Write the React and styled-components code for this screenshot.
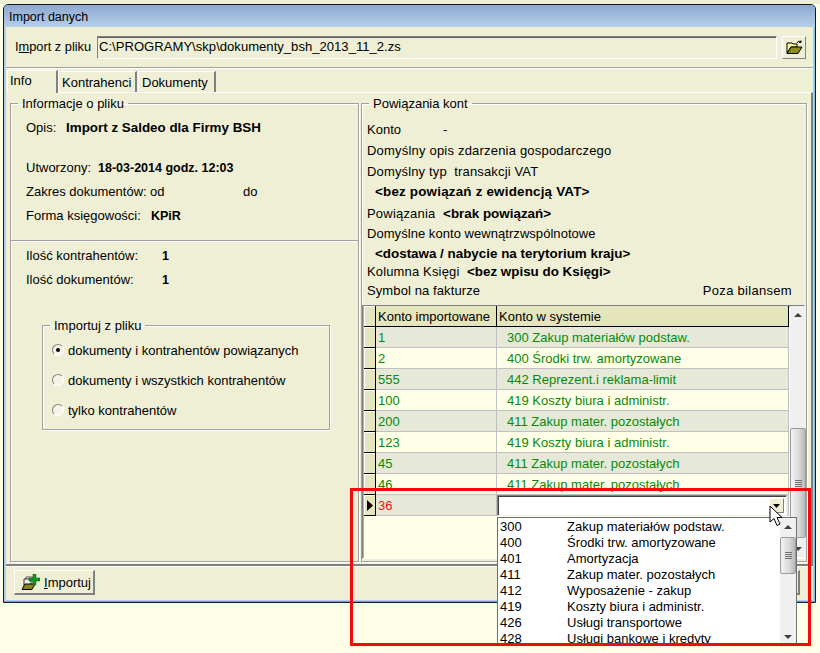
import React from 'react';
import styled, { createGlobalStyle } from 'styled-components';

const Global = createGlobalStyle`
  html, body { margin: 0; padding: 0; background: #FFFFE8; overflow: hidden; }
  body { font-family: "Liberation Sans", Arial, sans-serif; font-size: 13px; color: #000; }
  * { box-sizing: border-box; }
`;

const Page = styled.div`
  position: relative; width: 820px; height: 653px; overflow: hidden; padding: 4px 0 0 3px;
  background: linear-gradient(#EFEFD6, #EFEFD6) 0 0 / 100% 4px no-repeat, #FFFFE8;
`;
const Win = styled.div`
  width: 813px; height: 599px; display: flex; flex-direction: column;
  border: 1px solid #1a1a1a; border-radius: 5px 5px 0 0;
  background: #B4CDE8; padding: 0 2px 2px 2px; box-shadow: inset 0 -1px 0 #3FB6D8, inset -1px 0 0 #7FC4E4;
`;
const TitleBar = styled.div`
  height: 22px; flex: none; margin: 0 -2px; padding: 2px 0 0 5px; display: flex; align-items: center;
  background: linear-gradient(#8EA9CF, #B5CEE9); font-size: 12.5px; border-radius: 4px 4px 0 0;
`;
const Client = styled.div`
  flex: 1; display: flex; flex-direction: column; background: #EFEFD5; min-height: 0;
`;
const ImportBar = styled.div`
  height: 41px; flex: none; padding: 9px 9px 0 9px; display: flex; align-items: flex-start;
  border-bottom: 1px solid #A0A0A0;
`;
const FileLabel = styled.label`
  width: 82px; height: 22px; line-height: 22px; flex: none; font-size: 12.8px;
  u { text-decoration: underline; }
`;
const PathField = styled.div`
  flex: none; width: 680px; height: 23px; line-height: 20px; padding-left: 1px; background: #EFEFD5;
  border: 1px solid #fff; border-top: 1px solid #808080; border-left: 1px solid #808080;
  box-shadow: inset 0 1px 0 #606060; font-size: 13.1px; overflow: hidden; white-space: nowrap;
`;
const IconBtn = styled.button`
  width: 24px; height: 23px; margin-left: 5px; padding: 0; flex: none; background: #EFEFD5; display: flex;
  align-items: center; justify-content: center;
  border: 1px solid #808080; border-top-color: #fff; border-left-color: #fff;
`;
const TabStrip = styled.div`
  height: 24px; flex: none; display: flex; align-items: flex-end; padding-left: 1px; border-top: 1px solid #fff;
  position: relative; z-index: 1;
`;
const Tab = styled.div`
  height: ${p => (p.$active ? 23 : 21)}px; width: ${p => p.$w}px; padding: ${p => (p.$active ? '0 0 3px 2px' : '0 0 0 3px')};
  line-height: ${p => (p.$active ? 20 : 22)}px; margin-right: ${p => (p.$active ? 0 : 1)}px; border-top: 1px solid #fff; border-left: 1px solid #fff;
  border-right: 2px solid #808080; font-size: 13px; margin-bottom: ${p => (p.$active ? -1 : 0)}px;
  background: #EFEFD5; white-space: nowrap;
`;
const TabPanel = styled.div`
  flex: 1; min-height: 0; display: flex; margin-left: 1px; padding: 3px 4px 3px 3px; gap: 2px;
  border-top: 1px solid #fff; border-right: 2px solid #808080;
`;
const Group = styled.fieldset`
  margin: 0; padding: 0; min-width: 0; height: ${p => p.$h || 'auto'}; flex: ${p => p.$flex || 'none'};
  width: ${p => p.$w || 'auto'}; margin-left: ${p => p.$ml || 0}px; margin-top: ${p => p.$mt || 0}px;
  border: 1px solid #A0A0A0; box-shadow: 1px 1px 0 #fff, inset 1px 1px 0 #fff;
`;
const Legend = styled.legend`
  margin-left: 7px; padding: 0 4px; height: 14px; line-height: 16px; white-space: nowrap;
`;
const LeftBody = styled.div` padding-top: 8px; `;
const Row = styled.div`
  height: 20px; line-height: 20px; display: flex; white-space: nowrap; letter-spacing: ${p => p.$ls ?? 0}px;
  padding-left: ${p => p.$pl ?? 15}px; margin-top: ${p => p.$mt || 0}px;
`;
const Lab = styled.span` width: ${p => p.$w}px; flex: none; `;
const Bold = styled.b`
  font-weight: 700; font-size: ${p => (p.$small ? 12.5 : 13.4)}px; letter-spacing: ${p => p.$ls ?? 0}px;
`;
const Divider = styled.div`
  height: 2px; margin-top: 14px; border-top: 1px solid #A0A0A0; border-bottom: 1px solid #fff;
`;
const OptRow = styled.div`
  height: 20px; display: flex; align-items: center; gap: 4px; padding-left: 9px; margin-bottom: 10px; white-space: nowrap;
`;
const OptBody = styled.div` padding-top: 8px; `;
const Radio = styled.span`
  width: 12px; height: 12px; border-radius: 50%; flex: none; background: #F4F4EA; display: flex; align-items: center; justify-content: center;
  border: 1px solid #808080; border-right-color: #fff; border-bottom-color: #fff;
  &::after { content: ''; width: 4px; height: 4px; border-radius: 50%; background: ${p => (p.$on ? '#000' : 'transparent')}; }
`;
const RightBody = styled.div` padding-top: 10px; `;
const RightRow = styled(Row)` padding-left: 5px; justify-content: ${p => p.$between ? 'space-between' : 'flex-start'}; padding-right: 14px; `;
const Grid = styled.div`
  position: relative; margin: 4px 1px 0 0; height: 254px; display: flex; background: #FFFFE8;
  border: 1px solid #808080; border-right-color: #fff; border-bottom-color: #fff;
  box-shadow: inset 1px 1px 0 #B0B0B0; padding: 0 1px 1px 1px;
`;
const Table = styled.div`
  width: 425px; flex: none; margin-right: 1px;
`;
const TRow = styled.div`
  display: grid; grid-template-columns: 12px 121px 292px; height: 21px; line-height: 21px;
  background: ${p => (p.$head ? '#E5E5BD' : p.$odd ? '#E6E9D8' : '#FFFFE8')};
  border-bottom: 1px solid ${p => (p.$head ? '#000' : '#C0C0C0')};
  color: ${p => (p.$head ? '#000' : '#0A8A0A')};
`;
const Ind = styled.div`
  background: #E5E5BD; border-right: 1px solid #000; border-bottom: 1px solid #000; margin-bottom: -1px;
  box-shadow: inset 1px 1px 0 #fff; display: flex; align-items: center; justify-content: center;
`;
const Cell = styled.div`
  position: relative; padding-left: ${p => p.$pl ?? 2}px; white-space: nowrap; overflow: ${p => p.$open ? 'visible' : 'hidden'};
  color: ${p => p.$red ? '#F01010' : 'inherit'};
  border-right: 1px solid ${p => (p.$head ? '#000' : '#C0C0C0')};
`;
const Editor = styled.div`
  position: absolute; left: 0; top: 0; right: 1px; height: 21px; background: #fff;
  border: 1px solid #808080; border-right-color: #eee; border-bottom-color: #eee; box-shadow: inset 1px 1px 0 #404040;
  display: flex; justify-content: flex-end; align-items: center; padding-right: 2px;
`;
const DropBtn = styled.div`
  width: 15px; height: 15px; background: #EFEFD5; display: flex; align-items: center; justify-content: center;
  border: 1px solid #808080; border-top-color: #fff; border-left-color: #fff;
`;
const Scroll = styled.div`
  width: 16px; flex: none; background: #F0F0F0; display: flex; flex-direction: column; align-items: stretch; position: relative;
  padding-top: 0;
`;
const Arrow = styled.div`
  height: 17px; flex: none; display: flex; align-items: center; justify-content: center;
  &::after { content: ''; border-left: 4px solid transparent; border-right: 4px solid transparent;
    ${p => (p.$down ? 'border-top: 4px solid #404040;' : 'border-bottom: 4px solid #404040;')} }
`;
const Thumb = styled.div`
  height: ${p => p.$h}px; margin-top: ${p => p.$mt}px; flex: none; border: 1px solid #9A9A9A; border-radius: 2px;
  background: linear-gradient(90deg, #F4F4F4, #D8D8D8 60%, #B8B8B8); display: flex; align-items: center; justify-content: center;
`;
const Grip = styled.div`
  width: 7px; height: 7px; background: repeating-linear-gradient(#707070 0 1px, transparent 1px 2px);
`;
const Spring = styled.div` flex: 1; `;
const List = styled.div`
  position: absolute; left: 0; top: 22px; width: 300px; height: 129px; background: #fff; color: #000; z-index: 5;
  border: 1px solid #707070; display: flex; overflow: hidden;
`;
const ListRows = styled.div` flex: 1; padding: 1px 0 0 2px; `;
const ListRow = styled.div`
  display: grid; grid-template-columns: 67px 1fr; height: 16px; line-height: 16px;
`;
const Bottom = styled.div`
  height: 36px; flex: none; margin-top: -1px; border-top: 2px solid #808080; display: flex; align-items: flex-start; justify-content: space-between;
  padding: 4px 13px 0 8px; box-shadow: inset 0 1px 0 #fff;
`;
const Btn = styled.button`
  width: ${p => p.$w}px; height: 25px; padding: 0 0 0 6px; background: #EFEFD5; display: flex; align-items: center; gap: 4px;
  font: inherit; color: #000; border: 2px solid #808080; border-top: 1px solid #fff; border-left: 1px solid #fff;
  u { text-decoration: underline; }
`;
const RedBox = styled.div`
  position: absolute; left: 350px; top: 488px; width: 461px; height: 158px; border: 3px solid #F50A0A; z-index: 10; pointer-events: none;
`;
const Cursor = styled.svg`
  position: absolute; left: 769px; top: 505px; z-index: 11;
`;

const rows = [
  ['1', '300 Zakup materiałów podstaw.'],
  ['2', '400 Środki trw. amortyzowane'],
  ['555', '442 Reprezent.i reklama-limit'],
  ['100', '419 Koszty biura i administr.'],
  ['200', '411 Zakup mater. pozostałych'],
  ['123', '419 Koszty biura i administr.'],
  ['45', '411 Zakup mater. pozostałych'],
  ['46', '411 Zakup mater. pozostałych'],
];
const options = [
  ['300', 'Zakup materiałów podstaw.'],
  ['400', 'Środki trw. amortyzowane'],
  ['401', 'Amortyzacja'],
  ['411', 'Zakup mater. pozostałych'],
  ['412', 'Wyposażenie - zakup'],
  ['419', 'Koszty biura i administr.'],
  ['426', 'Usługi transportowe'],
  ['428', 'Usługi bankowe i kredyty'],
];

const FolderIcon = () => (
  <svg width="17" height="15" viewBox="0 0 17 15">
    <path d="M1 3h5l1 1h4v3H5L1 13z" fill="#FFFF99" stroke="#000" />
    <path d="M1 13.500 5 7h11l-4 6.500z" fill="#8C8C1E" stroke="#000" />
    <path d="M11 3c1-2 2-2 4-1.500M15 .5v2h-2" fill="none" stroke="#000" />
  </svg>
);
const ImportIcon = () => (
  <svg width="19" height="17" viewBox="0 0 19 17">
    <path d="M5 3h7v8H5z" fill="#fff" stroke="#555" />
    <path d="M3 5h7v8H3z" fill="#eee" stroke="#333" />
    <path d="M1 15.500 4 10h10l-3 5.500z" fill="#85851C" stroke="#000" />
    <path d="M12 0h3v4h4v3h-4v4h-3V7H8V4h4z" fill="#0C9A1A" stroke="#0A5A10" strokeWidth=".5" />
  </svg>
);

export default function App() {
  return (
    <Page>
      <Global />
      <Win>
        <TitleBar>Import danych</TitleBar>
        <Client>
          <ImportBar>
            <FileLabel>I<u>m</u>port z pliku</FileLabel>
            <PathField>C:\PROGRAMY\skp\dokumenty_bsh_2013_11_2.zs</PathField>
            <IconBtn aria-label="Otwórz"><FolderIcon /></IconBtn>
          </ImportBar>
          <TabStrip>
            <Tab $active $w={51}>Info</Tab>
            <Tab $w={79}>Kontrahenci</Tab>
            <Tab $w={78}>Dokumenty</Tab>
          </TabStrip>
          <TabPanel>
            <Group $w="349px" $h="466px">
              <Legend>Informacje o pliku</Legend>
              <LeftBody>
                <Row><Lab $w={40}>Opis:</Lab><Bold>Import z Saldeo dla Firmy BSH</Bold></Row>
                <Row $mt={20}><Lab $w={72}>Utworzony:</Lab><Bold $small>18-03-2014 godz. 12:03</Bold></Row>
                <Row $mt={4}><Lab $w={124}>Zakres dokumentów:</Lab><Lab $w={93}>od</Lab><span>do</span></Row>
                <Row $mt={4}><Lab $w={125}>Forma księgowości:</Lab><Bold $small>KPiR</Bold></Row>
                <Divider />
                <Row $mt={4}><Lab $w={136}>Ilość kontrahentów:</Lab><Bold $small>1</Bold></Row>
                <Row $mt={4}><Lab $w={136}>Ilość dokumentów:</Lab><Bold $small>1</Bold></Row>
                <Group $w="288px" $h="112px" $ml={31} $mt={28}>
                  <Legend>Importuj z pliku</Legend>
                  <OptBody>
                    <OptRow><Radio $on />dokumenty i kontrahentów powiązanych</OptRow>
                    <OptRow><Radio />dokumenty i wszystkich kontrahentów</OptRow>
                    <OptRow><Radio />tylko kontrahentów</OptRow>
                  </OptBody>
                </Group>
              </LeftBody>
            </Group>
            <Group $flex="1" $h="466px">
              <Legend>Powiązania kont</Legend>
              <RightBody>
                <RightRow><Lab $w={76}>Konto</Lab>-</RightRow>
                <RightRow $mt={1} $ls={0.2}>Domyślny opis zdarzenia gospodarczego</RightRow>
                <RightRow $mt={1} $ls={0.15}>Domyślny typ&nbsp; transakcji VAT</RightRow>
                <RightRow><Lab $w={8} /><Bold $ls={0.2}>&lt;bez powiązań z ewidencją VAT&gt;</Bold></RightRow>
                <RightRow $mt={2} $ls={0.2}>Powiązania&nbsp;&nbsp;<Bold $ls={0}>&lt;brak powiązań&gt;</Bold></RightRow>
                <RightRow $ls={0.05}>Domyślne konto wewnątrzwspólnotowe</RightRow>
                <RightRow><Lab $w={8} /><Bold>&lt;dostawa / nabycie na terytorium kraju&gt;</Bold></RightRow>
                <RightRow $mt={-2} $ls={0.15}>Kolumna Księgi&nbsp;&nbsp;<Bold $ls={0}>&lt;bez wpisu do Księgi&gt;</Bold></RightRow>
                <RightRow $mt={-1} $between $ls={0.1}><span>Symbol na fakturze</span><Bilans>Poza bilansem</Bilans></RightRow>
                <Grid>
                  <Table>
                    <TRow $head>
                      <Ind />
                      <Cell $head>Konto importowane</Cell>
                      <Cell $head>Konto w systemie</Cell>
                    </TRow>
                    {rows.map((r, i) => (
                      <TRow key={r[0]} $odd={i % 2 === 0}>
                        <Ind />
                        <Cell>{r[0]}</Cell>
                        <Cell $pl={10}>{r[1]}</Cell>
                      </TRow>
                    ))}
                    <TRow $odd>
                      <Ind>
                        <svg width="6" height="11" viewBox="0 0 6 11"><path d="M0 0l6 5.500L0 11z" fill="#000" /></svg>
                      </Ind>
                      <Cell $red>36</Cell>
                      <Cell $open>
                        <Editor>
                          <DropBtn>
                            <svg width="7" height="4" viewBox="0 0 7 4"><path d="M0 0h7L3.500 4z" fill="#000" /></svg>
                          </DropBtn>
                        </Editor>
                        <List>
                          <ListRows>
                            {options.map(o => (
                              <ListRow key={o[0]}><span>{o[0]}</span><span>{o[1]}</span></ListRow>
                            ))}
                          </ListRows>
                          <Scroll>
                            <Arrow />
                            <Thumb $h={37} $mt={2}><Grip /></Thumb>
                            <Spring />
                            <Arrow $down />
                          </Scroll>
                        </List>
                      </Cell>
                    </TRow>
                  </Table>
                  <Scroll>
                    <Arrow />
                    <Thumb $h={110} $mt={105}><Grip /></Thumb>
                    <Spring />
                    <Arrow $down />
                  </Scroll>
                </Grid>
              </RightBody>
            </Group>
          </TabPanel>
          <Bottom>
            <Btn $w={81}><ImportIcon /><span><u>I</u>mportuj</span></Btn>
            <Btn $w={80} aria-label="Zamknij" />
          </Bottom>
        </Client>
      </Win>
      <RedBox />
      <Cursor width="16" height="22" viewBox="0 0 16 22">
        <path d="M1 1v16l4-3.500 3 7 3-1.500-3-6.500h5z" fill="#fff" stroke="#000" />
      </Cursor>
    </Page>
  );
}

const Bilans = styled.span` letter-spacing: .3px; `;
